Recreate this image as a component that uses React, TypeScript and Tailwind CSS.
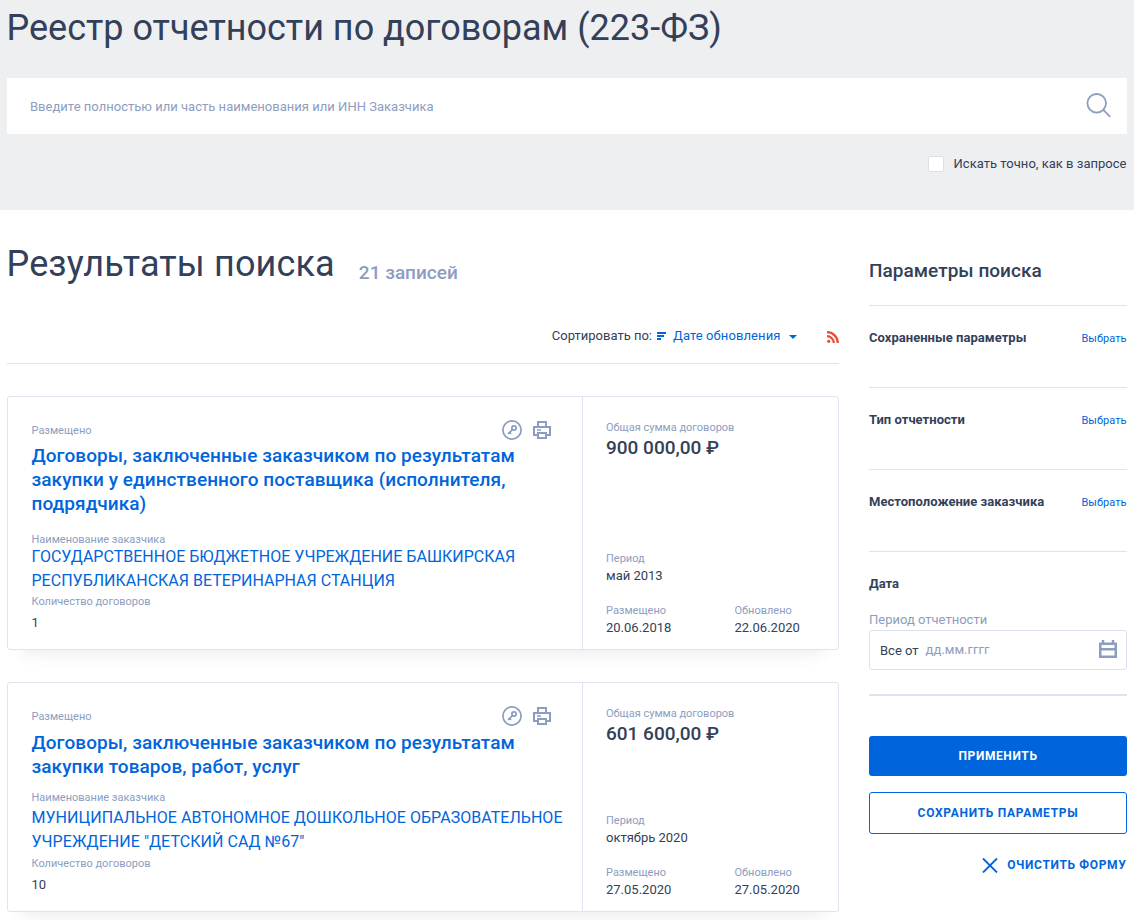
import React from 'react';

type Contract = {
  title: string[];
  titleClass: string;
  customer: string[];
  customerClass: string;
  count: string;
  total: string;
  period: string;
  placed: string;
  updated: string;
  heightClass: string;
};

const contracts: Contract[] = [
  {
    title: ['Договоры, заключенные заказчиком по результатам', 'закупки у единственного поставщика (исполнителя,', 'подрядчика)'],
    titleClass: 'mt-2 mb-[19px]',
    customer: ['ГОСУДАРСТВЕННОЕ БЮДЖЕТНОЕ УЧРЕЖДЕНИЕ БАШКИРСКАЯ', 'РЕСПУБЛИКАНСКАЯ ВЕТЕРИНАРНАЯ СТАНЦИЯ'],
    customerClass: 'mb-1 tracking-[0.01px]',
    count: '1',
    total: '900 000,00 ₽',
    period: 'май 2013',
    placed: '20.06.2018',
    updated: '22.06.2020',
    heightClass: 'h-[254px]',
  },
  {
    title: ['Договоры, заключенные заказчиком по результатам', 'закупки товаров, работ, услуг'],
    titleClass: 'mt-[9px] mb-[14px]',
    customer: ['МУНИЦИПАЛЬНОЕ АВТОНОМНОЕ ДОШКОЛЬНОЕ ОБРАЗОВАТЕЛЬНОЕ', 'УЧРЕЖДЕНИЕ "ДЕТСКИЙ САД №67"'],
    customerClass: 'mt-[3px] mb-[5px] tracking-[0.045px]',
    count: '10',
    total: '601 600,00 ₽',
    period: 'октябрь 2020',
    placed: '27.05.2020',
    updated: '27.05.2020',
    heightClass: 'h-[230px]',
  },
];

const filters = ['Сохраненные параметры', 'Тип отчетности', 'Местоположение заказчика'];

function SearchIcon() {
  return (
    <svg width="26" height="26" viewBox="0 0 26 26" fill="none" stroke="#8d9dc0" strokeWidth="1.8">
      <circle cx="10.7" cy="10.3" r="9.3" />
      <path d="M17.3 16.9l6.9 7" />
    </svg>
  );
}

function KeyIcon() {
  return (
    <svg width="20" height="20" viewBox="0 0 20 20" fill="none" stroke="#8d9dc0">
      <circle cx="10" cy="10" r="9.1" strokeWidth="1.7" />
      <circle cx="12" cy="8" r="2.1" strokeWidth="1.8" />
      <path d="M10.4 9.6L6 13.9M7.2 12l1.9 1.9" strokeWidth="1.8" />
    </svg>
  );
}

function PrinterIcon() {
  return (
    <svg width="18" height="18" viewBox="0 0 18 18" fill="none" stroke="#8d9dc0" strokeWidth="2">
      <path d="M5 5V1h8v4M5 14H1V6h16v8h-4" />
      <path d="M5 12h8v5H5z" />
      <path d="M4 9h4" strokeWidth="1.5" />
    </svg>
  );
}

function CalendarIcon() {
  return (
    <svg width="18" height="18" viewBox="0 0 18 18" fill="none" stroke="#8d9dc0">
      <path d="M1.25 3.75h15.5v13H1.25z" strokeWidth="2.5" />
      <path d="M1 9.2h16M4 0v4M14 0v4" strokeWidth="2.5" />
    </svg>
  );
}

function SortIcon() {
  return (
    <svg width="9" height="8" viewBox="0 0 9 8" fill="#0065dc">
      <path d="M0 0h9v2H0zM0 3h7v2H0zM0 6h4v2H0z" />
    </svg>
  );
}

function RssIcon() {
  return (
    <svg width="12" height="12" viewBox="0 0 12 12" fill="none" stroke="#ea4f36" strokeWidth="2.2">
      <circle cx="1.7" cy="10.3" r="1.6" fill="#ea4f36" stroke="none" />
      <path d="M0 5.2A6.8 6.8 0 0 1 6.8 12M0 1.2A10.8 10.8 0 0 1 10.8 12" />
    </svg>
  );
}

function Label({ children }: { children: React.ReactNode }) {
  return <div className="text-[11px] leading-[10px] text-[#8d9dc0]">{children}</div>;
}

function Fact({ label, value }: { label: string; value: string }) {
  return (
    <div className="w-[128.5px]">
      <Label>{label}</Label>
      <div className="mt-1 text-[13px] leading-4">{value}</div>
    </div>
  );
}

function ContractCard({ contract }: { contract: Contract }) {
  return (
    <article
      className={`${contract.heightClass} flex rounded-[3px] border border-[#e1e3ef] bg-white shadow-[0_18px_16px_-16px_rgba(51,65,92,0.12)]`}
    >
      <div className="w-[575px] shrink-0 border-r border-[#e1e3ef] pt-[29px] pl-[23.5px]">
        <div className="flex h-[10px] items-center justify-between pr-[31px]">
          <Label>Размещено</Label>
          <div className="-mt-0.5 flex items-center gap-[11px]">
            <KeyIcon />
            <PrinterIcon />
          </div>
        </div>
        <h2
          className={`${contract.titleClass} text-[19px] leading-6 font-medium tracking-[0.06px] whitespace-nowrap text-[#0065dc]`}
        >
          {contract.title.map((line) => (
            <div key={line}>{line}</div>
          ))}
        </h2>
        <Label>Наименование заказчика</Label>
        <div className={`${contract.customerClass} text-base leading-6 whitespace-nowrap text-[#0065dc]`}>
          {contract.customer.map((line) => (
            <div key={line}>{line}</div>
          ))}
        </div>
        <Label>Количество договоров</Label>
        <div className="mt-2 text-[13px] leading-4">{contract.count}</div>
      </div>
      <div className="flex flex-1 flex-col justify-between pt-[26px] pb-[13px] pl-[23px]">
        <div>
          <Label>Общая сумма договоров</Label>
          <div className="mt-[3px] text-[19px] leading-6 font-medium">{contract.total}</div>
        </div>
        <div>
          <Fact label="Период" value={contract.period} />
          <div className="mt-[22px] flex">
            <Fact label="Размещено" value={contract.placed} />
            <Fact label="Обновлено" value={contract.updated} />
          </div>
        </div>
      </div>
    </article>
  );
}

function SearchParams() {
  return (
    <aside className="w-[258px] pt-12">
      <h2 className="mb-[22px] text-[19px] leading-[25px] font-medium tracking-[0.03px]">Параметры поиска</h2>
      {filters.map((name) => (
        <div key={name} className="flex h-[82px] justify-between border-t border-[#dfe3ee] pt-6 leading-4">
          <span className="text-[13px] font-bold tracking-[0.03px]">{name}</span>
          <a className="pr-[0.5px] text-[11px] leading-[17px] tracking-[0.05px] text-[#0065dc]">Выбрать</a>
        </div>
      ))}
      <div className="border-t border-[#dfe3ee] pt-6">
        <div className="text-[13px] leading-4 font-bold">Дата</div>
        <div className="mt-5 text-[13px] leading-4 text-[#8d9dc0]">Период отчетности</div>
        <div className="mt-[2px] flex h-10 items-center rounded-[3px] border border-[#d9e2ee] pr-[9px] pl-[10px] text-[13px]">
          <span className="pt-0.5">Все от</span>
          <span className="ml-[7px] flex-1 text-[#8d9dc0]">дд.мм.гггг</span>
          <span className="mb-0.5">
            <CalendarIcon />
          </span>
        </div>
      </div>
      <div className="mt-6 border-t-2 border-[#dfe3ee]" />
      <button className="mt-10 h-10 w-full rounded-[3px] bg-[#0065dc] text-xs font-bold tracking-[0.6px] text-white">ПРИМЕНИТЬ</button>
      <button className="mt-4 h-[42px] w-full rounded-[3px] border border-[#0065dc] text-xs font-bold tracking-[0.7px] text-[#0065dc]">
        СОХРАНИТЬ ПАРАМЕТРЫ
      </button>
      <button className="mt-[23px] flex w-full items-center justify-end gap-[9px] pr-[0.5px] text-xs leading-4 font-bold tracking-[0.65px] text-[#0065dc]">
        <svg width="16" height="16" viewBox="0 0 16 16" fill="none" stroke="#0065dc" strokeWidth="1.8">
          <path d="M1 1.5l14 14M15 1.5L1 15.5" />
        </svg>
        ОЧИСТИТЬ ФОРМУ
      </button>
    </aside>
  );
}

export default function App() {
  return (
    <div className="h-[920px] w-[1134px] overflow-hidden bg-white font-['Roboto',sans-serif] text-[#334059]">
      <header className="h-[210px] bg-[#eeeff1] px-[7px]">
        <h1 className="-ml-[0.5px] h-[78px] pt-px text-4xl leading-[55px]">Реестр отчетности по договорам (223-ФЗ)</h1>
        <div className="flex h-14 items-center justify-between bg-white pr-[15px] pl-[23px]">
          <span className="pt-0.5 text-[13px] tracking-[0.02px] text-[#8d9dc0]">
            Введите полностью или часть наименования или ИНН Заказчика
          </span>
          <span className="mb-px">
            <SearchIcon />
          </span>
        </div>
        <label className="mt-[22px] flex items-center justify-end pr-[0.5px] text-[13px] leading-4 tracking-[0.02px]">
          <span className="mr-[9.5px] size-4 rounded-[2px] border border-[#dbe1ea] bg-white" />
          Искать точно, как в запросе
        </label>
      </header>
      <div className="flex gap-[30px] px-[7px]">
        <main className="w-[832px]">
          <div className="flex h-[116px] pt-8">
            <h1 className="-ml-[0.5px] text-4xl leading-[44px] tracking-[0.15px]">Результаты поиска</h1>
            <span className="mt-[19px] ml-6 text-[19px] leading-6 font-medium text-[#8d9dc0]">21 записей</span>
          </div>
          <div className="flex h-[38px] items-start justify-end border-b border-[#dfe3ee] pt-[2px] text-[13px] leading-4">
            <span>Сортировать по:</span>
            <span className="mt-1 ml-[5px]">
              <SortIcon />
            </span>
            <a className="ml-[7px] w-[107px] tracking-[0.1px] whitespace-nowrap text-[#0065dc]">Дате обновления</a>
            <svg className="mt-[7px] ml-[9px]" width="8" height="4" viewBox="0 0 8 4" fill="#0065dc">
              <path d="M0 0h8L4 4z" />
            </svg>
            <span className="mt-[3px] ml-[30px]">
              <RssIcon />
            </span>
          </div>
          <div className="mt-8 flex flex-col gap-8">
            {contracts.map((contract) => (
              <ContractCard key={contract.total} contract={contract} />
            ))}
          </div>
        </main>
        <SearchParams />
      </div>
    </div>
  );
}
